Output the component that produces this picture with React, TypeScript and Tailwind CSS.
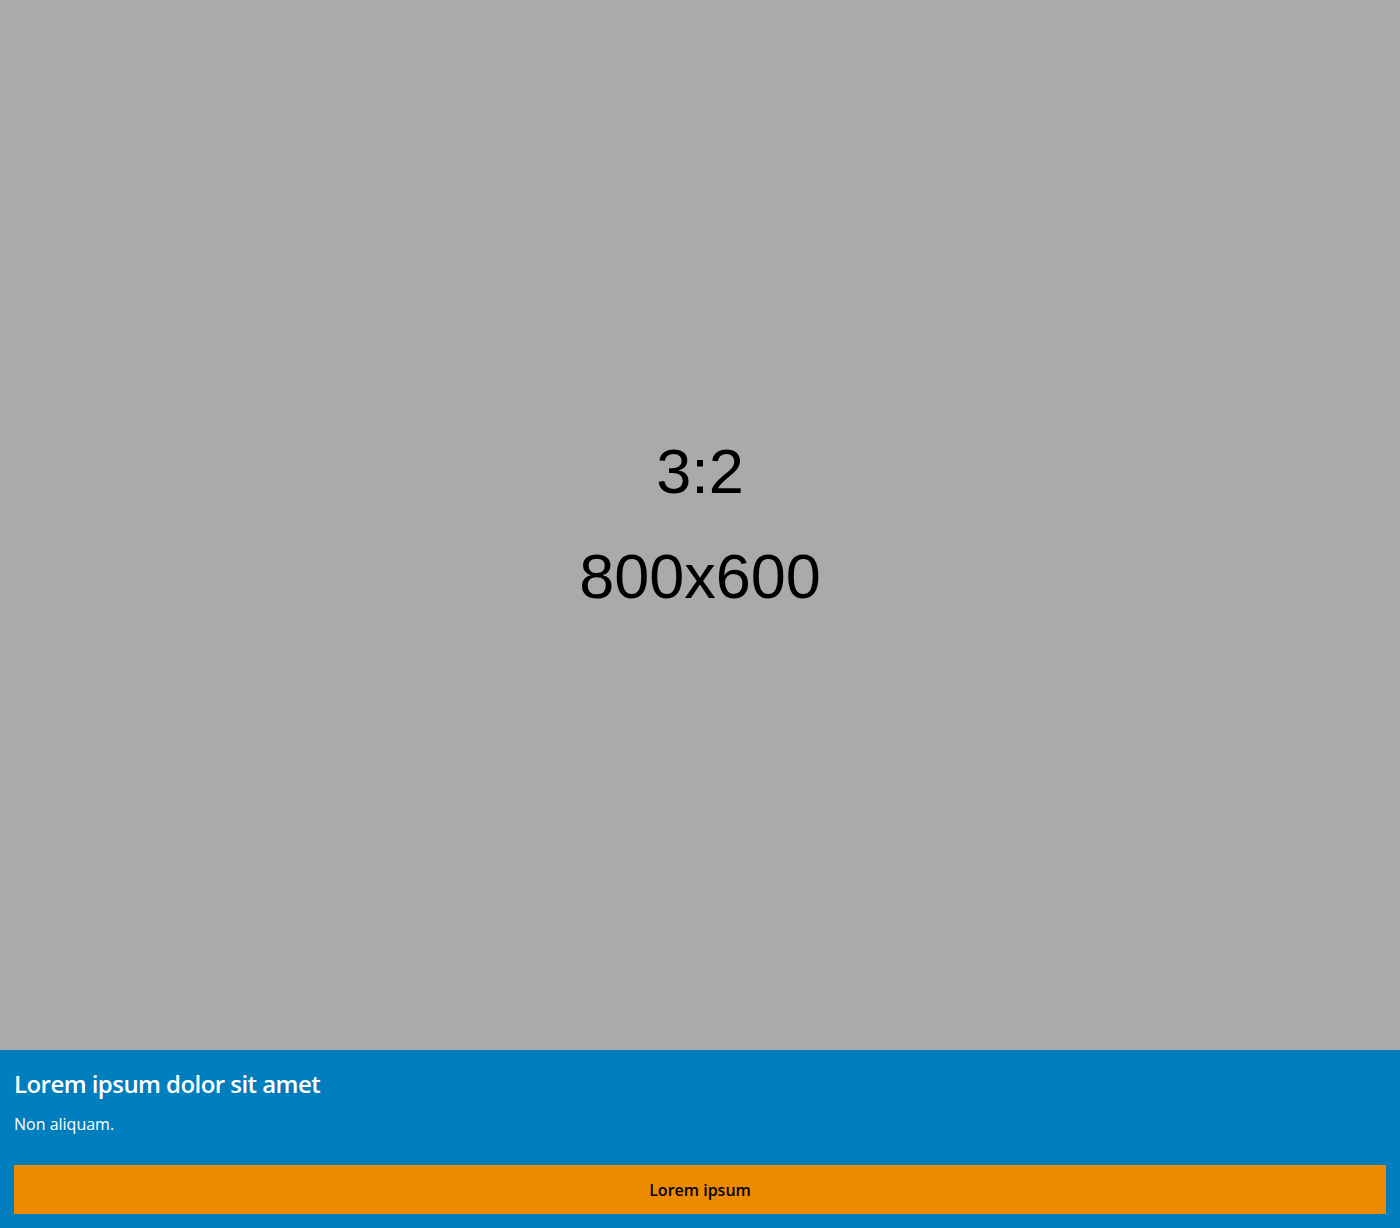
export default function App() {
  return (
    <div className="w-[1400px] h-[1228px] flex flex-col" style={{ fontFamily: '"Open Sans", sans-serif' }}>
      <div className="h-[1050px] bg-[#aaaaaa] flex flex-col items-center justify-center text-black" style={{ fontFamily: '"Liberation Sans", Arial, sans-serif' }}>
        <div className="text-[63px] leading-none mt-[-2px]">3:2</div>
        <div className="text-[63px] leading-none mt-[42px]">800x600</div>
      </div>
      <div className="flex-1 bg-[#007ebd] px-[14px] pt-[14px] pb-[14px] flex flex-col">
        <h1 className="text-white text-[24px] font-semibold leading-[40px] tracking-[-0.55px]">Lorem ipsum dolor sit amet</h1>
        <p className="text-white text-[16px] leading-[22px] mt-[9px]">Non aliquam.</p>
        <button className="mt-auto h-[49px] w-full bg-[#ec8a00] text-black text-[16px] font-semibold">Lorem ipsum</button>
      </div>
    </div>
  );
}
